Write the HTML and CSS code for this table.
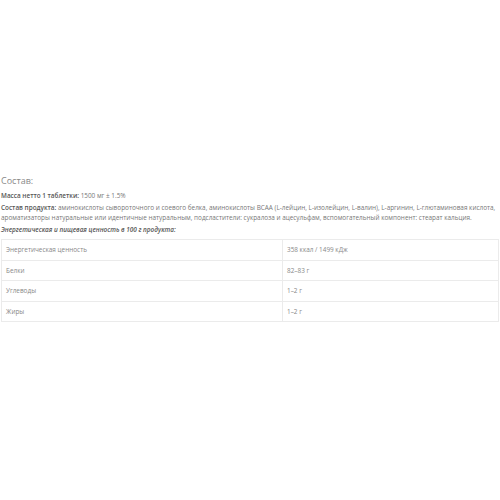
FILE: index.html
```html
<!DOCTYPE html>
<html lang="ru">
<head>
    <meta charset="UTF-8">
    <meta name="viewport" content="width=device-width, initial-scale=1.0">
    <title>Состав</title>
    <link rel="stylesheet" href="styles.css">
</head>
<body>
    <div class="description">
        <h3 class="section-title">Состав:</h3>
        <p><strong>Масса нетто 1 таблетки:</strong> 1500 мг ± 1.5%</p>
        <p><strong>Состав продукта:</strong> аминокислоты сывороточного и соевого белка, аминокислоты BCAA (L-лейцин, L-изолейцин, L-валин), L-аргинин, L-глютаминовая кислота, ароматизаторы натуральные или идентичные натуральным, подсластители: сукралоза и ацесульфам, вспомогательный компонент: стеарат кальция.</p>
        <p class="table-caption"><strong><em>Энергетическая и пищевая ценность в 100 г продукта:</em></strong></p>

        <!-- Nutrition table -->
        <table class="nutrition">
            <tr>
                <td>Энергетическая ценность</td>
                <td>358 ккал / 1499 кДж</td>
            </tr>
            <tr>
                <td>Белки</td>
                <td>82–83 г</td>
            </tr>
            <tr>
                <td>Углеводы</td>
                <td>1–2 г</td>
            </tr>
            <tr>
                <td>Жиры</td>
                <td>1–2 г</td>
            </tr>
        </table>
    </div>
</body>
</html>
```

FILE: styles.css
```css
body, html {
    margin: 0;
    padding: 0;
    background: #fff;
    font-family: 'Open Sans', sans-serif;
    color: #777;
}

.description {
    padding: 175px 1px 0 1px;
}

.section-title {
    font-size: 9px;
    font-weight: 400;
    color: #888;
    margin: 0 0 4px;
    line-height: 12px;
}

p {
    font-size: 6.4px;
    line-height: 9.5px;
    margin: 0 0 2.5px;
}

strong {
    color: #555;
    font-weight: 600;
}

.table-caption {
    margin-bottom: 5px;
}

.nutrition {
    width: 498px;
    border-collapse: collapse;
    border: 1px solid #ebebeb;
    font-size: 6.4px;
    color: #888;
}

.nutrition td {
    border: 1px solid #ebebeb;
    padding: 0 4px;
    height: 19.5px;
}

.nutrition td:first-child {
    width: 272px;
}
```
